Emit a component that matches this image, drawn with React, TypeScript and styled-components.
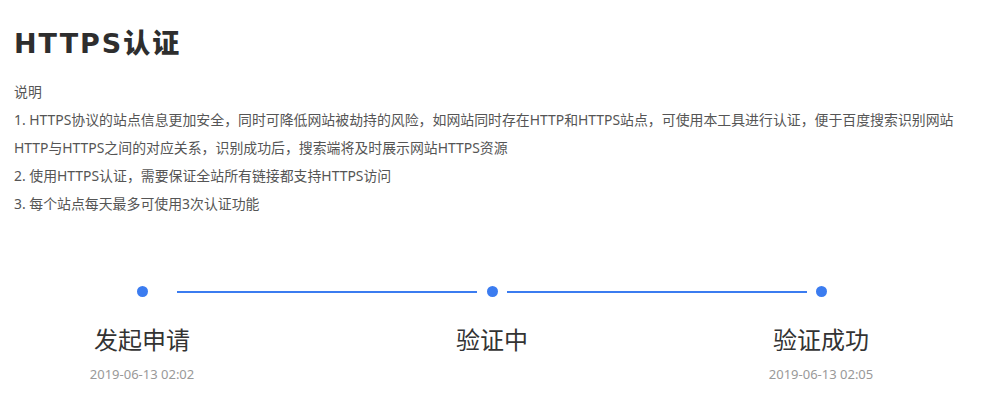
import React from "react";
import styled, { createGlobalStyle } from "styled-components";

const GlobalStyle = createGlobalStyle`
  html, body {
    margin: 0;
    padding: 0;
    background: #fff;
  }
  body {
    font-family: "Noto Sans", "Noto Sans CJK SC", sans-serif;
  }
`;

interface stepProps {
  title: string;
  time?: string;
}

const steps: stepProps[] = [
  { title: "发起申请", time: "2019-06-13 02:02" },
  { title: "验证中" },
  { title: "验证成功", time: "2019-06-13 02:05" },
];

const connectors = [
  { left: 25, width: 300, right: 5 },
  { left: 5, width: 300, right: 4 },
];

const Step: React.FC<stepProps> = ({ title, time }) => {
  return (
    <StepDiv>
      <Dot />
      <StepTitle>{title}</StepTitle>
      <StepTime>{time || "\u00a0"}</StepTime>
    </StepDiv>
  );
};

const App: React.FC = () => {
  return (
    <Page>
      <GlobalStyle />
      <Title>HTTPS认证</Title>
      <Desc>
        <div>说明</div>
        <div>
          1. HTTPS协议的站点信息更加安全，同时可降低网站被劫持的风险，如网站同时存在HTTP和HTTPS站点，可使用本工具进行认证，便于百度搜索识别网站
        </div>
        <div>HTTP与HTTPS之间的对应关系，识别成功后，搜索端将及时展示网站HTTPS资源</div>
        <div>2. 使用HTTPS认证，需要保证全站所有链接都支持HTTPS访问</div>
        <div>3. 每个站点每天最多可使用3次认证功能</div>
      </Desc>
      <Steps>
        {steps.map((s, i) => (
          <React.Fragment key={s.title}>
            <Step title={s.title} time={s.time} />
            {i < connectors.length && (
              <Connector
                $left={connectors[i].left}
                $width={connectors[i].width}
                $right={connectors[i].right}
              />
            )}
          </React.Fragment>
        ))}
      </Steps>
    </Page>
  );
};

export default App;

const Page = styled.div`
  box-sizing: border-box;
  width: 981px;
  height: 408px;
  padding: 0 14px;
  overflow: hidden;
`;

const Title = styled.h1`
  margin: 24px 0 0;
  font-family: "DejaVu Sans", "Noto Sans CJK SC", sans-serif;
  font-size: 27px;
  font-weight: 900;
  letter-spacing: 2px;
  line-height: 40px;
  color: #2e2e2e;
`;

const Desc = styled.div`
  margin-top: 14px;
  font-size: 13.9px;
  line-height: 28px;
  color: #555;
`;

const Steps = styled.div`
  display: flex;
  align-items: flex-start;
  margin-top: 68px;
  padding-left: 118px;
`;

const StepDiv = styled.div`
  width: 20px;
  display: flex;
  flex-direction: column;
  align-items: center;
  white-space: nowrap;
`;

const Dot = styled.div`
  width: 11px;
  height: 11px;
  border-radius: 50%;
  background-color: #3b7cf0;
`;

const StepTitle = styled.div`
  margin-top: 27px;
  font-size: 24px;
  line-height: 32px;
  color: #333;
`;

const StepTime = styled.div`
  margin-top: 9px;
  font-size: 13px;
  line-height: 18px;
  color: #999;
`;

const Connector = styled.div<{ $left: number; $width: number; $right: number }>`
  flex: none;
  width: ${(p) => p.$width}px;
  height: 2px;
  margin: 4.5px ${(p) => p.$right}px 0 ${(p) => p.$left}px;
  background-color: #3b7cf0;
`;
